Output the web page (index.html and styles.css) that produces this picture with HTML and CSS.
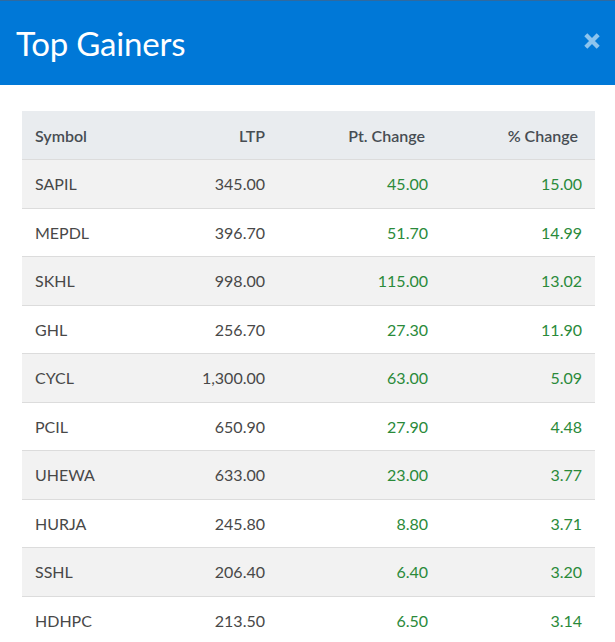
FILE: index.html
```html
<!DOCTYPE html>
<html lang="en">
<head>
<meta charset="utf-8">
<title>Top Gainers</title>
<link rel="stylesheet" href="styles.css">
</head>
<body>
<div class="modal">
  <header class="modal-header">
    <h1 class="modal-title">Top Gainers</h1>
    <button class="close" aria-label="Close">
      <svg viewBox="0 0 16 16" width="18" height="18"><path d="M2.5 2.5 L13.5 13.5 M13.5 2.5 L2.5 13.5" stroke="currentColor" stroke-width="3.8" stroke-linecap="butt"/></svg>
    </button>
  </header>
  <div class="modal-body">
    <table class="gainers">
      <thead>
        <tr><th class="sym">Symbol</th><th>LTP</th><th>Pt. Change</th><th class="last">% Change</th></tr>
      </thead>
      <tbody>
        <tr><td class="sym">SAPIL</td><td>345.00</td><td class="up">45.00</td><td class="up last">15.00</td></tr>
        <tr><td class="sym">MEPDL</td><td>396.70</td><td class="up">51.70</td><td class="up last">14.99</td></tr>
        <tr><td class="sym">SKHL</td><td>998.00</td><td class="up">115.00</td><td class="up last">13.02</td></tr>
        <tr><td class="sym">GHL</td><td>256.70</td><td class="up">27.30</td><td class="up last">11.90</td></tr>
        <tr><td class="sym">CYCL</td><td>1,300.00</td><td class="up">63.00</td><td class="up last">5.09</td></tr>
        <tr><td class="sym">PCIL</td><td>650.90</td><td class="up">27.90</td><td class="up last">4.48</td></tr>
        <tr><td class="sym">UHEWA</td><td>633.00</td><td class="up">23.00</td><td class="up last">3.77</td></tr>
        <tr><td class="sym">HURJA</td><td>245.80</td><td class="up">8.80</td><td class="up last">3.71</td></tr>
        <tr><td class="sym">SSHL</td><td>206.40</td><td class="up">6.40</td><td class="up last">3.20</td></tr>
        <tr><td class="sym">HDHPC</td><td>213.50</td><td class="up">6.50</td><td class="up last">3.14</td></tr>
      </tbody>
    </table>
  </div>
</div>
</body>
</html>
```
FILE: styles.css
```css
html, body {
  margin: 0;
  padding: 0;
  background: #ffffff;
}
body {
  font-family: "Source Sans Pro", Lato, "Noto Sans", sans-serif;
  color: #444;
}
.modal {
  width: 615px;
  overflow: hidden;
}
.modal-header {
  display: flex;
  align-items: center;
  justify-content: space-between;
  height: 85px;
  box-sizing: border-box;
  background: #0078d7;
  border-top: 1px solid #2f6aa0;
  padding: 0 14px 0 16px;
}
.modal-title {
  margin: 0;
  font-size: 33px;
  font-weight: 400;
  color: #ffffff;
  letter-spacing: -0.2px;
}
.close {
  background: none;
  border: 0;
  padding: 0;
  color: #8cc4ee;
  display: flex;
  margin-top: -5px;
}
.modal-body {
  padding: 26px 20px 0 22px;
}
.gainers {
  width: 573px;
  border-collapse: collapse;
  font-size: 16px;
}
.gainers th, .gainers td {
  height: 48.5px;
  padding: 0 13px;
  text-align: right;
  border-bottom: 1px solid #dcdcdc;
  box-sizing: border-box;
}
.gainers th {
  background: #e9ecef;
  color: #474d53;
  font-weight: 600;
}
.gainers td {
  color: #484848;
}
.gainers .sym {
  text-align: left;
  width: 128px;
}
.gainers th:nth-child(2), .gainers td:nth-child(2) { width: 128px; }
.gainers th:nth-child(3), .gainers td:nth-child(3) { width: 163px; }
.gainers th:nth-child(3) { padding-right: 16px; }
.gainers th.last { padding-right: 17px; }
.gainers td.last { padding-right: 13px; }
.gainers tbody tr:nth-child(odd) td {
  background: #f2f2f2;
}
.gainers td.up {
  color: #2a8a3a;
}
```
